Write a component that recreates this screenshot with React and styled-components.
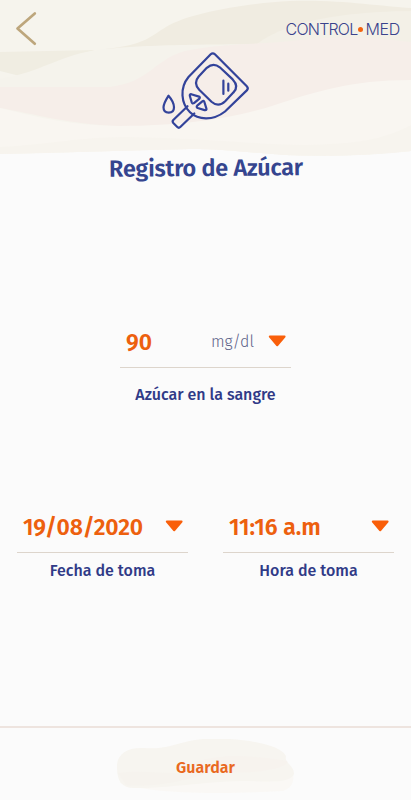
import React from 'react';
import styled, { createGlobalStyle } from 'styled-components';

const App = () => (
  <>
    <GlobalStyle />
    <Screen>
      <Header>
        <Waves />
        <TopBar>
          <BackButton aria-label="Volver">
            <svg width="24" height="38" viewBox="0 0 24 38" fill="none">
              <path d="M20.8 3.5 L3.5 18.5 L20.8 33.7" stroke="#bda67c" strokeWidth="2.7" strokeLinecap="round" strokeLinejoin="round" />
            </svg>
          </BackButton>
          <Logo>
            <LogoWord $spacing="-0.8px">CONTROL</LogoWord>
            <LogoDot />
            <LogoWord $spacing="-0.3px">MED</LogoWord>
          </Logo>
        </TopBar>
        <MeterIcon />
        <Title>Registro de Azúcar</Title>
      </Header>
      <Main>
        <Field $width="171px">
          <Picker>
            <Value>90</Value>
            <Unit>mg/dl</Unit>
            <Caret />
          </Picker>
          <Label $gap="16px">Azúcar en la sangre</Label>
        </Field>
        <FieldRow>
          <Field $width="171px">
            <Picker>
              <Value $spacing="-0.15px">19/08/2020</Value>
              <Caret />
            </Picker>
            <Label $gap="7px">Fecha de toma</Label>
          </Field>
          <Field $width="171px">
            <Picker>
              <Value>11:16 a.m</Value>
              <Caret />
            </Picker>
            <Label $gap="7px">Hora de toma</Label>
          </Field>
        </FieldRow>
      </Main>
      <Footer>
        <SaveButton>
          <Brush />
          <SaveText>Guardar</SaveText>
        </SaveButton>
      </Footer>
    </Screen>
  </>
);

const Waves = () => (
  <WavesSvg width="411" height="160" viewBox="0 0 411 160">
    <path d="M0 0H411V151C380 155 330 157 285 155C245 152 220 149 190 149C130 150 60 153 0 154Z" fill="#f6f4ed" />
    <path d="M105 49C145 45 151 36 166 27C190 12 250 3 290 1C335 -1 380 6 411 8V45L245 52Z" fill="#f0ece1" />
    <path d="M250 50C270 30 315 12 411 11V70H240Z" fill="#f3f0e7" />
    <path d="M0 52L95 50C65 57 46 70 20 76L0 71Z" fill="#f0ede2" />
    <path d="M0 79C40 72 60 56 92 51C130 45 190 43 411 45V100H0Z" fill="#f5f3ec" />
    <path d="M0 87H110C150 82 155 59 185 51C230 42 265 45 300 40C340 35 380 38 411 42V95C300 120 180 133 100 125C55 121 25 112 0 108Z" fill="#f6eee9" />
    <path d="M0 108C35 117 75 126 120 126C185 126 235 118 275 105C315 92 350 80 411 80V151C370 155 325 157 285 155C245 152 220 149 190 149L0 154Z" fill="#f9f6f1" />
    <path d="M0 147C55 144 70 138 125 137C205 138 245 144 305 145C355 144 383 140 411 125V151C370 155 325 157 285 155C245 152 220 149 190 149L0 154Z" fill="#f7f4ee" />
  </WavesSvg>
);

const MeterIcon = () => (
  <Meter
    width="92"
    height="82"
    viewBox="160 50 92 82"
    fill="none"
    stroke="#33439a"
    strokeWidth="2.2"
    strokeLinecap="round"
    strokeLinejoin="round"
  >
    <path d="M210.7 54.3Q212.8 52.3 214.9 54.3L246.8 86.2Q248.8 88.3 246.8 90.4L225 111.5C213 121 198 120 190 112.3C181 103.5 179.5 88 188.5 77Z" />
    <path d="M206.8 67.8Q213.3 62.2 219.8 67.3L232.7 79.4Q239.5 86.5 233.3 92.6L225.2 101.2Q218.4 107.8 211.5 101.7L199.2 89.8Q193 83 198.7 76.5Z" />
    <path d="M223.4 80.7V94M228.3 83.7V90.7" />
    <path d="M191.2 94.2L199 96.6Q200.5 97.3 199.4 98.6L194 103.1Q192.4 104 191.7 102.3L189.8 95.7Q189.7 94 191.2 94.2Z" />
    <path d="M202.3 101.3L197.2 105.7Q196 107 197.7 108L204.6 110.1Q206.9 110.5 206.4 108.6L204.3 101.7Q203.6 100.3 202.3 101.3Z" />
    <path d="M187.5 106.2L173.3 120Q172 121.5 173.3 122.9L177.3 127Q178.8 128.5 180.3 127L194.3 113.5" />
    <path d="M168.5 95.7C166.3 99.2 163.5 103.5 163.5 107.3C163.5 110.7 165.7 112.7 168.8 112.7C171.9 112.7 174 110.6 174 107.3C174 103.4 171 98.5 168.5 95.7Z" />
  </Meter>
);

const Caret = () => (
  <CaretSvg width="19" height="12" viewBox="0 0 19 12">
    <path d="M1.8 1.5H16.6L9.2 10.3Z" fill="#f95f0a" stroke="#f95f0a" strokeWidth="2" strokeLinejoin="round" />
  </CaretSvg>
);

const Brush = () => (
  <BrushSvg width="180" height="60" viewBox="0 0 180 60">
    <path d="M3 43C20 52 80 57 166 52C180 49 180 34 172 25L60 31Z" fill="#faf8f5" />
    <path d="M1 29C0 16 10 8 28 9C55 11 62 2 87 0C115 -2 163 3 170 17C168 24 178 26 178 35C174 45 153 42 125 42C85 43 45 50 18 49C6 49 1 42 1 29Z" fill="#f7f5f0" />
    <path d="M64 30C90 15 125 14 171 22C174 29 141 35 113 33Z" fill="#f7f3ee" />
    <path d="M2 34C30 30 55 37 92 33C70 44 25 49 10 46Z" fill="#f6f3ee" />
  </BrushSvg>
);

// Styled Components
const GlobalStyle = createGlobalStyle`
  * {
    box-sizing: border-box;
  }

  body {
    margin: 0;
    background: #fbfbfb;
    font-family: "Fira Sans", "Noto Sans", sans-serif;
  }

  button {
    padding: 0;
    border: none;
    background: none;
    font-family: inherit;
    cursor: pointer;
  }
`;

const Screen = styled.div`
  display: flex;
  flex-direction: column;
  width: 411px;
  height: 800px;
  overflow: hidden;
`;

const Header = styled.header`
  position: relative;
  display: flex;
  flex-direction: column;
  align-items: center;
  height: 200px;
`;

const WavesSvg = styled.svg`
  position: absolute;
  top: 0;
  left: 0;
  z-index: -1;
`;

const TopBar = styled.div`
  display: flex;
  align-items: flex-start;
  justify-content: space-between;
  width: 100%;
  height: 50px;
  padding: 10px 11px 0 14px;
`;

const BackButton = styled.button`
  display: flex;
`;

const Logo = styled.div`
  display: flex;
  align-items: center;
  margin-top: 9px;
`;

const LogoWord = styled.span`
  color: #3a438c;
  font-family: Inter, sans-serif;
  font-size: 16px;
  font-weight: 300;
  line-height: 20px;
  letter-spacing: ${({ $spacing }) => $spacing};
`;

const LogoDot = styled.span`
  width: 5px;
  height: 5px;
  margin: 0 2px 0 1px;
  border-radius: 50%;
  background: #f26410;
`;

const Meter = styled.svg`
  flex: none;
`;

const Title = styled.h1`
  margin: 19px 0 0;
  color: #35458f;
  font-size: 23.5px;
  font-weight: 600;
  line-height: 34px;
  letter-spacing: -0.25px;
  white-space: nowrap;
  transform: rotate(-0.5deg);
`;

const Main = styled.main`
  display: flex;
  flex: 1;
  flex-direction: column;
  align-items: center;
  padding-top: 124px;
`;

const Field = styled.div`
  display: flex;
  flex-direction: column;
  width: ${({ $width }) => $width};
`;

const FieldRow = styled.div`
  display: flex;
  gap: 35px;
  margin-top: 103px;
`;

const Picker = styled.div`
  display: flex;
  align-items: center;
  height: 44px;
  padding: 0 4px 6px 6px;
  border-bottom: 1px solid #ddd5cc;
`;

const Value = styled.span`
  margin-top: -1px;
  color: #ed600e;
  font-size: 23px;
  font-weight: 600;
  line-height: 30px;
  letter-spacing: ${({ $spacing }) => $spacing || 'normal'};
  white-space: nowrap;
`;

const Unit = styled.span`
  margin: -2px 14px 0 auto;
  color: #5d6289;
  font-size: 16px;
  font-weight: 300;
  line-height: 24px;
`;

const CaretSvg = styled.svg`
  flex: none;
  margin: -4px 0 0 auto;

  ${Unit} + & {
    margin-left: 0;
  }
`;

const Label = styled.span`
  margin-top: ${({ $gap }) => $gap};
  color: #303a87;
  font-size: 16px;
  font-weight: 500;
  line-height: 22px;
  text-align: center;
  white-space: nowrap;
`;

const Footer = styled.footer`
  display: flex;
  justify-content: center;
  height: 74px;
  padding-top: 11px;
  border-top: 2px solid #eee4df;
`;

const SaveButton = styled.button`
  position: relative;
  display: flex;
  align-items: center;
  justify-content: center;
  width: 180px;
  height: 60px;
`;

const BrushSvg = styled.svg`
  position: absolute;
  top: 0;
  left: 0;
`;

const SaveText = styled.span`
  position: relative;
  margin-top: -2px;
  color: #e9691f;
  font-size: 16px;
  font-weight: 600;
  line-height: 24px;
`;

export default App;
